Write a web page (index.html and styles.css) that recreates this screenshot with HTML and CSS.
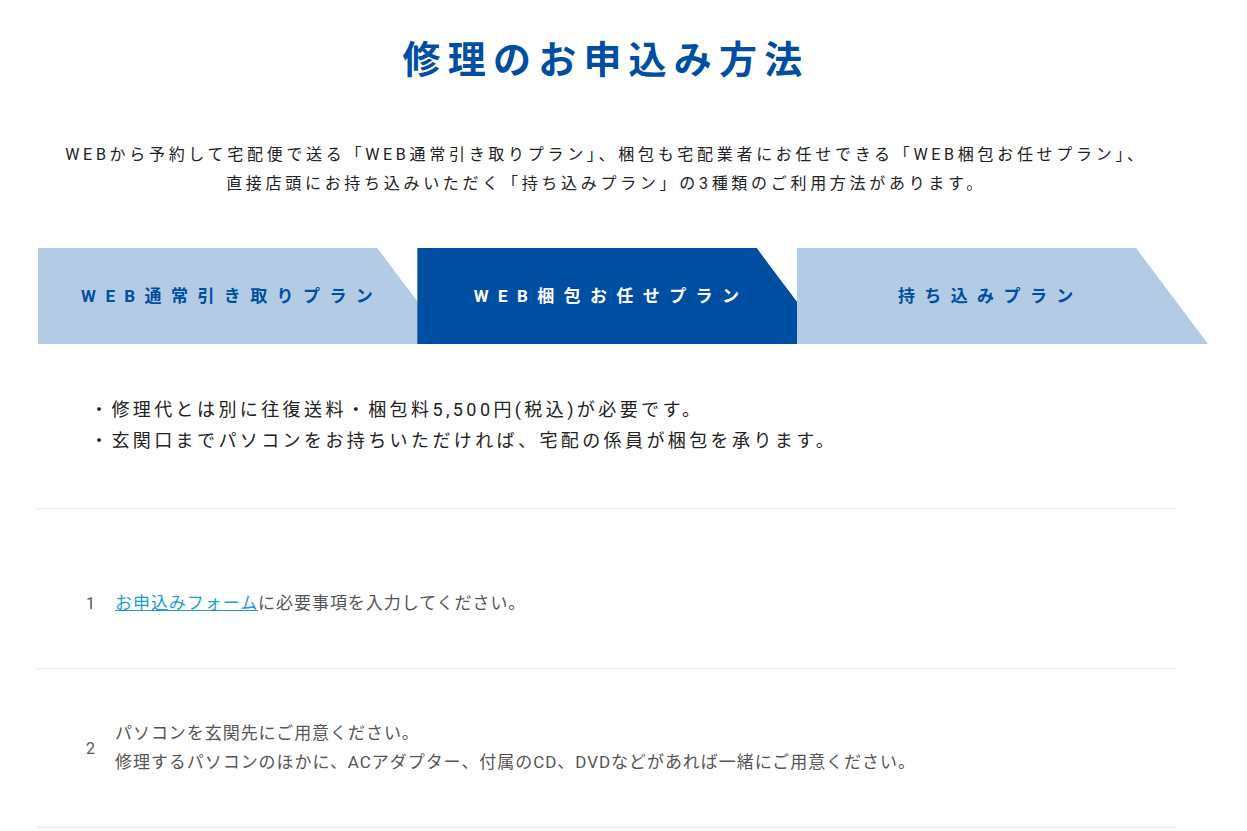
FILE: index.html
```html
<!DOCTYPE html>
<html lang="ja">
<head>
    <meta charset="UTF-8">
    <meta name="viewport" content="width=device-width, initial-scale=1.0">
    <title>修理のお申込み方法</title>
    <link rel="stylesheet" href="styles.css">
</head>
<body>
    <div class="container">
        <h1 class="title">修理のお申込み方法</h1>
        <p class="intro">
            WEBから予約して宅配便で送る「WEB通常引き取りプラン」、梱包も宅配業者にお任せできる「WEB梱包お任せプラン」、<br>
            直接店頭にお持ち込みいただく「持ち込みプラン」の3種類のご利用方法があります。
        </p>

        <div class="tabs">
            <div class="tab">WEB通常引き取りプラン</div>
            <div class="tab active">WEB梱包お任せプラン</div>
            <div class="tab">持ち込みプラン</div>
        </div>

        <ul class="notes">
            <li>・修理代とは別に往復送料・梱包料5,500円(税込)が必要です。</li>
            <li>・玄関口までパソコンをお持ちいただければ、宅配の係員が梱包を承ります。</li>
        </ul>

        <ol class="steps">
            <li class="step">
                <span class="step-num">1</span>
                <div class="step-body"><a href="#">お申込みフォーム</a>に必要事項を入力してください。</div>
            </li>
            <li class="step">
                <span class="step-num">2</span>
                <div class="step-body">
                    パソコンを玄関先にご用意ください。<br>
                    修理するパソコンのほかに、ACアダプター、付属のCD、DVDなどがあれば一緒にご用意ください。
                </div>
            </li>
        </ol>
    </div>
</body>
</html>
```

FILE: styles.css
```css
body {
    margin: 0;
    font-family: Roboto, "Noto Sans CJK JP", sans-serif;
    color: #222;
    background: #fff;
}
.container {
    width: 1140px;
    margin-left: 36px;
}
.title {
    margin: 30px 0 0;
    font-family: "Noto Sans CJK JP", sans-serif;
    font-size: 38px;
    line-height: 53px;
    font-weight: bold;
    letter-spacing: 7.2px;
    text-align: center;
    color: #004ea2;
}
.intro {
    margin: 57px 0 0;
    font-size: 16px;
    line-height: 29px;
    letter-spacing: 3.7px;
    text-align: center;
    color: #222;
}
.tabs {
    display: flex;
    margin: 50px 0 0 2px;
}
.tab {
    width: 412px;
    height: 96px;
    margin-right: -32px;
    padding-right: 24px;
    box-sizing: border-box;
    display: flex;
    align-items: center;
    justify-content: center;
    background: #b3cbe4;
    color: #004ea2;
    font-size: 17px;
    font-weight: bold;
    letter-spacing: 9.4px;
    line-height: 1;
    clip-path: polygon(0 0, calc(100% - 72px) 0, 100% 100%, 0 100%);
}
.tab.active {
    background: #004ea2;
    color: #fff;
}
.notes {
    list-style: none;
    margin: 0;
    padding: 50px 0 52px 54px;
    font-size: 18px;
    line-height: 31px;
    letter-spacing: 3.4px;
    color: #222;
    border-bottom: 1px solid #e8e8e8;
}
.steps {
    list-style: none;
    margin: 0;
    padding: 0;
}
.step {
    display: flex;
    align-items: center;
    padding: 50px 0 50px 50px;
    border-bottom: 1px solid #e8e8e8;
    font-size: 17px;
    line-height: 29px;
    color: #555;
}
.step:first-child {
    padding-top: 80px;
}
.step-num {
    width: 29px;
    font-size: 16px;
}
.step-body {
    letter-spacing: 0.95px;
}
.step-body a {
    color: #1e9bd7;
    text-decoration: underline;
}
```
